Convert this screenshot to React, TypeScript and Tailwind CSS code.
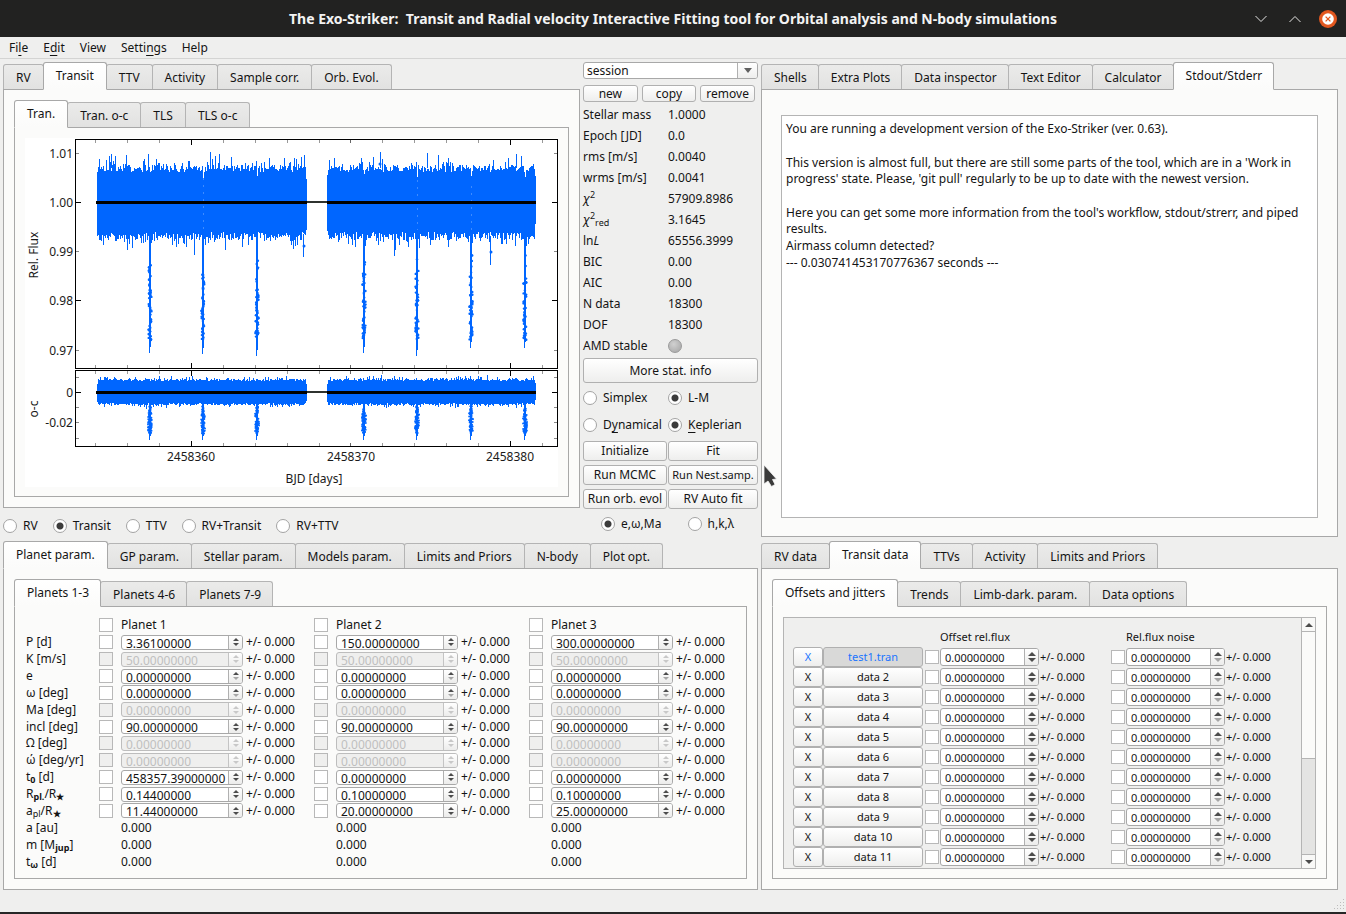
import React, { ReactNode, useId, useState } from "react";
import clsx from "clsx";

const BLUE = "#0066ff";

/* ---------- shared controls ---------- */

type TabsProps = {
  label: string;
  tabs: string[];
  active: number;
  className?: string;
  tabClassName?: string;
  paneClassName?: string;
  children: ReactNode;
};

function Tabs({ label, tabs, active, className, tabClassName = "px-[12px]", paneClassName, children }: TabsProps) {
  const [current, setCurrent] = useState(active);
  return (
    <section aria-label={label} className={clsx("flex min-w-0 flex-col", className)}>
      <div role="tablist" aria-label={label} className="flex h-[27px] items-end">
        {tabs.map((tab, i) => (
          <button
            key={tab}
            type="button"
            role="tab"
            aria-selected={i === current}
            onClick={() => setCurrent(i)}
            className={clsx(
              "-mr-px -mb-px shrink-0 rounded-t-[3px] border leading-4 whitespace-nowrap",
              tabClassName,
              i === current
                ? "relative z-10 h-[28px] border-[#a8a8a8] border-b-[#fbfbfa] bg-gradient-to-b from-white to-[#fbfbfa]"
                : "h-[26px] border-[#b4b4b4] border-b-[#a8a8a8] bg-gradient-to-b from-[#ebebea] to-[#e2e2e1] pt-[2px]",
            )}
          >
            {tab}
          </button>
        ))}
      </div>
      <div className={clsx("flex min-w-0 grow flex-col border border-[#a8a8a8] bg-[#fbfbfa]", paneClassName)}>
        {children}
      </div>
    </section>
  );
}

function PushButton({ children, className }: { children: ReactNode; className?: string }) {
  return (
    <button
      type="button"
      className={clsx(
        "min-w-0 rounded-[3px] border border-[#b0b0b0] text-center whitespace-nowrap",
        className ?? "bg-gradient-to-b from-white to-[#eeeeed]",
      )}
    >
      {children}
    </button>
  );
}

type RadioProps = { name: string; checked?: boolean; children: ReactNode; className?: string };

function Radio({ name, checked, children, className }: RadioProps) {
  return (
    <label className={clsx("flex items-center gap-[6px] whitespace-nowrap", className)}>
      <input
        type="radio"
        name={name}
        defaultChecked={checked}
        className="size-[14px] shrink-0 appearance-none rounded-full border border-[#a3a3a3] bg-white checked:bg-[radial-gradient(circle,#3c3c3c_0_3px,#ffffff_4px)]"
      />
      <span>{children}</span>
    </label>
  );
}

function Check({ label, disabled }: { label: string; disabled?: boolean }) {
  return (
    <input
      type="checkbox"
      aria-label={label}
      disabled={disabled}
      className="size-[14px] shrink-0 appearance-none border border-[#b8b8b8] bg-white checked:bg-[#5c5c5c] disabled:bg-[#efefee]"
    />
  );
}

type SpinProps = { label: string; value: string; disabled?: boolean; atMin?: boolean; large?: boolean; className: string };

function Spin({ label, value, disabled, atMin, large, className }: SpinProps) {
  const up = disabled ? "#c8c8c8" : "#4c4c4c";
  const down = disabled ? "#c8c8c8" : atMin ? "#a6a6a6" : "#4c4c4c";
  const tri = large ? "h-[4px] w-[8px]" : "h-[3px] w-[6px]";
  return (
    <span
      className={clsx(
        "flex shrink-0 overflow-hidden rounded-[3px] border",
        disabled ? "border-[#bdbdbd] bg-[#efefee]" : "border-[#a8a8a8] bg-white",
        className,
      )}
    >
      <input
        type="text"
        inputMode="decimal"
        aria-label={label}
        defaultValue={value}
        disabled={disabled}
        className="w-0 grow bg-transparent pt-[2px] pl-[4px] leading-3 outline-none disabled:text-[#bfbfbf]"
      />
      <span
        className={clsx(
          "flex w-[14px] flex-col items-center justify-center gap-[2px] border-l bg-gradient-to-b from-white to-[#ececeb]",
          disabled ? "border-[#c4c4c4]" : "border-[#b0b0b0]",
        )}
      >
        <button type="button" aria-label={`Increase ${label}`} disabled={disabled} className="block">
          <svg viewBox="0 0 8 4" className={clsx("block", tri)} aria-hidden="true">
            <path d="M4 0 8 4H0z" fill={up} />
          </svg>
        </button>
        <button type="button" aria-label={`Decrease ${label}`} disabled={disabled} className="block">
          <svg viewBox="0 0 8 4" className={clsx("block", tri)} aria-hidden="true">
            <path d="M0 0H8L4 4z" fill={down} />
          </svg>
        </button>
      </span>
    </span>
  );
}

/* ---------- light curve ---------- */

function makeRandom(seed: number) {
  let s = seed;
  return () => {
    s = (s * 1664525 + 1013904223) % 4294967296;
    return s / 4294967296;
  };
}

const RUNS: [number, number][] = [
  [72, 281],
  [302, 510],
];
const TRANSITS = [125, 178, 232, 339, 392, 446, 500];

function fluxBand() {
  const rnd = makeRandom(7);
  let d = "";
  for (const [a, b] of RUNS) {
    for (let x = a; x <= b; x++) {
      const edge = x === a || x === b ? 9 : 0;
      const notch = TRANSITS.includes(x) ? 9 : 0;
      const top = 34 - rnd() * 7 - Math.pow(rnd(), 7) * 14 + edge + notch;
      const bottom = 94 + rnd() * 8 + Math.pow(rnd(), 6) * 13 - edge;
      d += `M${x + 0.5} ${top.toFixed(1)}V${bottom.toFixed(1)}`;
    }
  }
  return d;
}

function residualBand() {
  const rnd = makeRandom(19);
  let d = "";
  for (const [a, b] of RUNS) {
    for (let x = a; x <= b; x++) {
      const edge = x === a || x === b ? 3 : 0;
      const top = 243 - rnd() * 2 - Math.pow(rnd(), 5) * 4 + edge;
      const bottom = 265 + rnd() * 2 + Math.pow(rnd(), 5) * 4 - edge;
      d += `M${x + 0.5} ${top.toFixed(1)}V${bottom.toFixed(1)}`;
    }
  }
  return d;
}

type Dot = { x: number; y: number; r: number };

function transitDots() {
  const rnd = makeRandom(43);
  const dots: Dot[] = [];
  for (const t of TRANSITS) {
    for (let i = 0; i < 46; i++) {
      const y = 108 + Math.sqrt(rnd()) * 94;
      dots.push({ x: t + (rnd() - 0.5) * 3, y, r: 1.2 });
    }
    for (let i = 0; i < 70; i++) {
      const f = rnd();
      const spread = f < 0.25 || f > 0.9 ? 2 : 4;
      dots.push({ x: t + (rnd() - 0.5) * spread, y: 268 + f * 28, r: 1 });
    }
  }
  return dots;
}

const FLUX_BAND = fluxBand();
const RESIDUAL_BAND = residualBand();
const DOTS = transitDots();
const DIP_ENDS = [215, 216, 218, 215, 218, 210, 210];
const X_TICKS = [70, 102, 134, 166, 198, 230, 262, 294, 325, 357, 389, 421, 453, 485, 517];
const MAJOR_X = [166, 485];

const FLUX_TICKS = [
  { y: 15.5, text: "1.01", major: false },
  { y: 64.5, text: "1.00", major: true },
  { y: 113.5, text: "0.99", major: false },
  { y: 162.5, text: "0.98", major: true },
  { y: 212.5, text: "0.97", major: false },
];
const RESIDUAL_TICKS = [
  { y: 239.5, text: "", major: false },
  { y: 254.5, text: "0", major: true },
  { y: 269.5, text: "", major: false },
  { y: 284.5, text: "-0.02", major: false },
  { y: 300.5, text: "", major: false },
];

function XTicks({ top, bottom }: { top: number; bottom: number }) {
  return (
    <>
      {X_TICKS.map((x) => {
        const major = MAJOR_X.includes(x);
        const len = major ? 5 : 3;
        return (
          <path
            key={x}
            d={`M${x + 0.5} ${top}v${len}M${x + 0.5} ${bottom}v${-len}`}
            stroke={major ? "#000" : x === 325 ? "#666" : "#999"}
          />
        );
      })}
    </>
  );
}

function YTicks({ ticks }: { ticks: typeof FLUX_TICKS }) {
  return (
    <>
      {ticks.map((t) => {
        const len = t.major ? 5 : 3;
        return (
          <g key={t.y}>
            <path d={`M51 ${t.y}h${len}M532 ${t.y}h${-len}`} stroke={t.major ? "#000" : "#888"} />
            <text x="48" y={t.y + 4} textAnchor="end" fill="#1a1a1a" stroke="none">
              {t.text}
            </text>
          </g>
        );
      })}
    </>
  );
}

function LightCurve() {
  return (
    <svg
      viewBox="0 0 533 349"
      role="img"
      aria-label="Relative flux and residuals against BJD"
      className="block w-full bg-white text-[12px]"
    >
      <g shapeRendering="crispEdges" fill="none">
        <path d={FLUX_BAND} stroke={BLUE} />
        <path d={RESIDUAL_BAND} stroke={BLUE} />
        {TRANSITS.map((t, i) => (
          <path
            key={t}
            d={`M${t} 92V${DIP_ENDS[i] - 6}M${t} 262V298`}
            stroke={BLUE}
            strokeWidth="2"
          />
        ))}
        {TRANSITS.map((t, i) => (
          <path key={t} d={`M${t - 0.5} 200V${DIP_ENDS[i]}M${t - 0.5} 290V302`} stroke={BLUE} />
        ))}
        <path d="M178.5 40V92M392.5 42V92M446.5 48V92" stroke="#3d8bff" strokeDasharray="2 5" />
        <path d="M278.5 96V119M490.5 96V108M465.5 98V127M169.500 96V117M369.500 96V118" stroke={BLUE} />
        <path d="M86.500 30V16M123.500 30V16M355.500 30V14M402.500 30V15M491.500 30V16M279.500 30V17" stroke={BLUE} />
      </g>
      <g fill={BLUE}>
        {DOTS.map((p, i) => (
          <circle key={i} cx={p.x.toFixed(1)} cy={p.y.toFixed(1)} r={p.r} />
        ))}
        <circle cx="466" cy="114" r="1.5" />
        <circle cx="279" cy="108" r="1.5" />
        <circle cx="355" cy="26" r="1.5" />
      </g>
      <g shapeRendering="crispEdges" fill="none" stroke="#000">
        <path d="M71 64.5H282M302 64.5H511M71 254.5H282M302 254.5H511" strokeWidth="3" />
        <path d="M282 64H302M282 254H302" strokeWidth="2" stroke="#2f332f" />
        <XTicks top={2} bottom={230} />
        <XTicks top={233} bottom={308} />
        <rect x="50.5" y="1.5" width="482" height="229" />
        <rect x="50.5" y="232.5" width="482" height="76" />
        <YTicks ticks={FLUX_TICKS} />
        <YTicks ticks={RESIDUAL_TICKS} />
      </g>
      <g fill="#1a1a1a" textAnchor="middle">
        <text x="166" y="323">2458360</text>
        <text x="326" y="323">2458370</text>
        <text x="485" y="323">2458380</text>
        <text x="289" y="345">BJD [days]</text>
        <text transform="translate(13 117) rotate(-90)">Rel. Flux</text>
        <text transform="translate(13 271) rotate(-90)">o-c</text>
      </g>
    </svg>
  );
}

/* ---------- statistics column ---------- */

const STATS: [ReactNode, ReactNode][] = [
  ["Stellar mass", "1.0000"],
  ["Epoch [JD]", "0.0"],
  ["rms [m/s]", "0.0040"],
  ["wrms [m/s]", "0.0041"],
  [
    <span>
      <i>χ</i>
      <sup className="text-[9px]">2</sup>
    </span>,
    "57909.8986",
  ],
  [
    <span>
      <i>χ</i>
      <sup className="text-[9px]">2</sup>
      <sub className="text-[9px]">red</sub>
    </span>,
    "3.1645",
  ],
  [
    <span>
      ln<i>L</i>
    </span>,
    "65556.3999",
  ],
  ["BIC", "0.00"],
  ["AIC", "0.00"],
  ["N data", "18300"],
  ["DOF", "18300"],
  [
    "AMD stable",
    <span
      role="img"
      aria-label="off"
      className="block size-[14px] rounded-full border border-[#9a9a9a] bg-[radial-gradient(circle_at_40%_35%,#d0d0d0,#a4a4a4)]"
    />,
  ],
];

function Mnemonic({ children }: { children: ReactNode }) {
  return <span className="underline underline-offset-[3px]">{children}</span>;
}

function FitColumn() {
  return (
    <div className="flex flex-col">
      <div className="grid h-[17px] rounded-[3px] border border-[#a8a8a8] bg-white">
        <select
          aria-label="Session"
          defaultValue="session"
          className="col-start-1 row-start-1 h-[15px] appearance-none bg-transparent pt-px pl-[3px] leading-[14px] outline-none"
        >
          <option>session</option>
        </select>
        <span className="pointer-events-none col-start-1 row-start-1 grid w-[20px] place-items-center justify-self-end rounded-r-[2px] border-l border-[#b0b0b0] bg-gradient-to-b from-white to-[#eeeeed]">
          <svg viewBox="0 0 8 5" className="h-[5px] w-[8px]" aria-hidden="true">
            <path d="M0 0H8L4 5z" fill="#606060" />
          </svg>
        </span>
      </div>
      <div className="mt-[6px] mr-[3px] grid h-[17px] grid-cols-3 gap-[4px] leading-[14px]">
        <PushButton>new</PushButton>
        <PushButton>copy</PushButton>
        <PushButton>remove</PushButton>
      </div>
      <dl className="mt-[2px]">
        {STATS.map(([name, value], i) => (
          <div key={i} className="grid h-[21px] grid-cols-[85px_1fr] items-center leading-4">
            <dt>{name}</dt>
            <dd>{value}</dd>
          </div>
        ))}
      </dl>
      <div className="mt-[2px] grid h-[25px]">
        <PushButton>More stat. info</PushButton>
      </div>
      <div className="mt-px grid grid-cols-[85px_1fr] leading-[27px]">
        <Radio name="minimizer">Simplex</Radio>
        <Radio name="minimizer" checked>
          L-M
        </Radio>
        <Radio name="model">
          D<Mnemonic>y</Mnemonic>namical
        </Radio>
        <Radio name="model" checked>
          <Mnemonic>K</Mnemonic>eplerian
        </Radio>
      </div>
      <div className="mt-[3px] grid auto-rows-[20px] grid-cols-[84px_1fr] gap-x-px gap-y-[4px] leading-[18px]">
        <PushButton>Initialize</PushButton>
        <PushButton>Fit</PushButton>
        <PushButton>Run MCMC</PushButton>
        <PushButton>
          <span className="text-[11px]">Run Nest.samp.</span>
        </PushButton>
        <PushButton>Run orb. evol</PushButton>
        <PushButton>RV Auto fit</PushButton>
      </div>
      <div className="mt-[5px] grid grid-cols-2 pl-[18px] leading-[20px]">
        <Radio name="coords" checked>
          e,ω,Ma
        </Radio>
        <Radio name="coords" className="pl-[8px]">
          h,k,λ
        </Radio>
      </div>
    </div>
  );
}

/* ---------- planet parameters ---------- */

type Param = { key: string; label: ReactNode; values: string[]; disabled?: boolean; atMin?: boolean };

const Sub = ({ children }: { children: ReactNode }) => <sub className="bottom-[-2px] text-[9px] font-bold">{children}</sub>;
const zeros = ["0.00000000", "0.00000000", "0.00000000"];

const PARAMS: Param[] = [
  { key: "P", label: "P [d]", values: ["3.36100000", "150.00000000", "300.00000000"] },
  { key: "K", label: "K [m/s]", values: ["50.00000000", "50.00000000", "50.00000000"], disabled: true },
  { key: "e", label: "e", values: zeros, atMin: true },
  { key: "omega", label: "ω [deg]", values: zeros, atMin: true },
  { key: "Ma", label: "Ma [deg]", values: zeros, disabled: true },
  { key: "incl", label: "incl [deg]", values: ["90.00000000", "90.00000000", "90.00000000"] },
  { key: "Omega", label: "Ω [deg]", values: zeros, disabled: true },
  { key: "omega dot", label: "ώ [deg/yr]", values: zeros, disabled: true },
  { key: "t0", label: <>t<Sub>0</Sub> [d]</>, values: ["458357.39000000", "0.00000000", "0.00000000"] },
  { key: "Rpl", label: <>R<Sub>pl.</Sub>/R<Sub>★</Sub></>, values: ["0.14400000", "0.10000000", "0.10000000"] },
  { key: "apl", label: <>a<sub className="bottom-[-2px] text-[9px]">pl</sub>/R<Sub>★</Sub></>, values: ["11.44000000", "20.00000000", "25.00000000"] },
];

const DERIVED: { key: string; label: ReactNode }[] = [
  { key: "a", label: "a [au]" },
  { key: "m", label: <>m [M<Sub>jup</Sub>]</> },
  { key: "tw", label: <>t<Sub>ω</Sub> [d]</> },
];

function PlanetGrid() {
  const id = useId();
  return (
    <div className="grid grow auto-rows-fr grid-cols-[73px_repeat(3,minmax(0,1fr))] items-center leading-[14px] whitespace-nowrap">
      <span />
      {[1, 2, 3].map((n) => (
        <label key={n} htmlFor={`${id}-${n}`} className="flex items-center gap-[8px]">
          <input
            id={`${id}-${n}`}
            type="checkbox"
            className="size-[14px] appearance-none border border-[#b8b8b8] bg-white checked:bg-[#5c5c5c]"
          />
          Planet {n}
        </label>
      ))}
      {PARAMS.map((p) => (
        <React.Fragment key={p.key}>
          <span>{p.label}</span>
          {p.values.map((v, i) => (
            <div key={i} className="flex items-center">
              <Check label={`Fit ${p.key}, planet ${i + 1}`} disabled={p.disabled} />
              <Spin
                label={`${p.key}, planet ${i + 1}`}
                value={v}
                disabled={p.disabled}
                atMin={p.atMin}
                className="ml-[8px] h-[15px] w-[122px]"
              />
              <span className="ml-[3px]">+/- 0.000</span>
            </div>
          ))}
        </React.Fragment>
      ))}
      {DERIVED.map((p) => (
        <React.Fragment key={p.key}>
          <span>{p.label}</span>
          {[1, 2, 3].map((n) => (
            <span key={n} className="pl-[22px]">
              0.000
            </span>
          ))}
        </React.Fragment>
      ))}
    </div>
  );
}

/* ---------- transit data ---------- */

const DATASETS = ["test1.tran", "data 2", "data 3", "data 4", "data 5", "data 6", "data 7", "data 8", "data 9", "data 10", "data 11"];
const DATA_COLS = "grid grid-cols-[130px_186px_1fr] items-center pl-[9px]";

function DatasetList() {
  return (
    <div className="flex grow border border-[#b4b4b4] bg-[#efefee] text-[11px] leading-[14px]">
      <div className="min-w-0 grow whitespace-nowrap">
        <div className={clsx(DATA_COLS, "h-[29px] pt-[8px]")}>
          <span />
          <span className="pl-[17px]">Offset rel.flux</span>
          <span className="pl-[17px]">Rel.flux noise</span>
        </div>
        {DATASETS.map((name, i) => {
          const loaded = i === 0;
          const face = "bg-gradient-to-b from-white to-[#eeeeed]";
          return (
            <div key={name} className={clsx(DATA_COLS, "h-[20px]")}>
              <div className="grid h-[20px] grid-cols-[30px_100px]">
                <PushButton className={clsx(face, loaded && "text-[#1a75ff]")}>X</PushButton>
                <PushButton className={loaded ? "bg-[#d9d9d8] text-[#1a75ff]" : face}>{name}</PushButton>
              </div>
              {["offset", "noise"].map((kind) => (
                <div key={kind} className="flex items-center pl-[2px]">
                  <Check label={`Fit ${kind} of ${name}`} />
                  <Spin
                    label={`${kind} of ${name}`}
                    value="0.00000000"
                    atMin={kind === "noise"}
                    large
                    className="ml-px h-[18px] w-[99px]"
                  />
                  <span className="ml-px">+/- 0.000</span>
                </div>
              ))}
            </div>
          );
        })}
      </div>
      <div className="flex w-[14px] flex-col border-l border-[#b4b4b4] bg-[#e4e4e3]">
        <button type="button" aria-label="Scroll up" className="grid h-[14px] place-items-center border-b border-[#b4b4b4] bg-[#f8f8f7]">
          <svg viewBox="0 0 8 4" className="h-[4px] w-[8px]" aria-hidden="true">
            <path d="M4 0 8 4H0z" fill="#4c4c4c" />
          </svg>
        </button>
        <div className="h-[127px] border-b border-[#b4b4b4] bg-[#fafaf9]" />
        <button type="button" aria-label="Scroll down" className="mt-auto grid h-[14px] place-items-center border-t border-[#b4b4b4] bg-[#f8f8f7]">
          <svg viewBox="0 0 8 4" className="h-[4px] w-[8px]" aria-hidden="true">
            <path d="M0 0H8L4 4z" fill="#4c4c4c" />
          </svg>
        </button>
      </div>
    </div>
  );
}

/* ---------- window ---------- */

const LOG = [
  "You are running a development version of the Exo-Striker (ver. 0.63).",
  "\u00a0",
  "This version is almost full, but there are still some parts of the tool, which are in a 'Work in progress' state. Please, 'git pull' regularly to be up to date with the newest version.",
  "\u00a0",
  "Here you can get some more information from the tool's workflow, stdout/strerr, and piped results.",
  "Airmass column detected?",
  "--- 0.030741453170776367 seconds ---",
];

function TitleBar() {
  return (
    <header className="flex h-[37px] items-center bg-[#222221] pr-[9px] pl-[91px] text-[#f3f3f3]">
      <h1 className="grow text-center text-[14px] font-bold whitespace-pre">
        The Exo-Striker:  Transit and Radial velocity Interactive Fitting tool for Orbital analysis and N-body simulations
      </h1>
      <button type="button" aria-label="Minimize" className="ml-auto">
        <svg viewBox="0 0 12 8" className="h-[8px] w-[12px]" fill="none" stroke="#e4e4e4" aria-hidden="true">
          <path d="M.5 1 6 6.5 11.500 1" />
        </svg>
      </button>
      <button type="button" aria-label="Maximize" className="ml-[22px]">
        <svg viewBox="0 0 12 8" className="h-[8px] w-[12px]" fill="none" stroke="#e4e4e4" aria-hidden="true">
          <path d="M.5 7 6 1.500 11.500 7" />
        </svg>
      </button>
      <button type="button" aria-label="Close" className="ml-[18px]">
        <svg viewBox="0 0 18 18" className="size-[18px]" aria-hidden="true">
          <circle cx="9" cy="9" r="9" fill="#e2571f" />
          <circle cx="9" cy="9" r="5.800" fill="#fff" />
          <path d="m6.600 6.600 4.800 4.800m0-4.800-4.800 4.800" stroke="#e2571f" strokeWidth="1.300" />
        </svg>
      </button>
    </header>
  );
}

export default function App() {
  return (
    <div className="relative flex min-h-screen flex-col bg-[#efefee] font-['Noto_Sans','Open_Sans',sans-serif] text-[12px] leading-4 text-[#141414]">
      <TitleBar />
      <nav aria-label="Menu" className="flex h-[22px] items-center gap-[15px] border-b border-[#d4d4d3] px-[9px]">
        <button type="button">Fi<Mnemonic>l</Mnemonic>e</button>
        <button type="button">E<Mnemonic>d</Mnemonic>it</button>
        <button type="button">View</button>
        <button type="button">Setti<Mnemonic>n</Mnemonic>gs</button>
        <button type="button">Help</button>
      </nav>

      <main className="grid grow grid-cols-[minmax(0,755fr)_minmax(0,577fr)] grid-rows-[auto_1fr] gap-x-[3px] pt-[3px] pr-[8px] pl-[3px]">
        <div className="grid grid-cols-[minmax(0,1fr)_175px] gap-x-[3px]">
          <div className="flex flex-col">
            <Tabs
              label="Plots"
              tabs={["RV", "Transit", "TTV", "Activity", "Sample corr.", "Orb. Evol."]}
              active={1}
              paneClassName="p-[10px]"
            >
              <Tabs label="Transit plots" tabs={["Tran.", "Tran. o-c", "TLS", "TLS o-c"]} active={0} paneClassName="p-[10px] pb-[9px]">
                <LightCurve />
              </Tabs>
            </Tabs>
            <div className="flex h-[33px] items-center gap-[15px] pt-[3px]">
              <Radio name="data">RV</Radio>
              <Radio name="data" checked>
                Transit
              </Radio>
              <Radio name="data">TTV</Radio>
              <Radio name="data">RV+Transit</Radio>
              <Radio name="data">RV+TTV</Radio>
            </div>
          </div>
          <FitColumn />
        </div>

        <Tabs
          label="Tools"
          tabs={["Shells", "Extra Plots", "Data inspector", "Text Editor", "Calculator", "Stdout/Stderr"]}
          active={5}
          className="pb-[4px]"
          tabClassName="pl-[12px] pr-[11px]"
          paneClassName="px-[19px] pt-[25px] pb-[18px]"
        >
          <div role="log" className="grow border border-[#b4b4b4] bg-white px-[4px] py-[5px]">
            {LOG.map((line, i) => (
              <p key={i} className="mb-px leading-4">
                {line}
              </p>
            ))}
          </div>
        </Tabs>

        <Tabs
          label="Model setup"
          tabs={["Planet param.", "GP param.", "Stellar param.", "Models param.", "Limits and Priors", "N-body", "Plot opt."]}
          active={0}
          paneClassName="p-[10px]"
        >
          <Tabs
            label="Planets"
            tabs={["Planets 1-3", "Planets 4-6", "Planets 7-9"]}
            active={0}
            className="grow"
            tabClassName="pl-[12px] pr-[11px]"
            paneClassName="pt-[10px] pr-[2px] pb-[8px] pl-[11px]"
          >
            <PlanetGrid />
          </Tabs>
        </Tabs>

        <Tabs
          label="Data setup"
          tabs={["RV data", "Transit data", "TTVs", "Activity", "Limits and Priors"]}
          active={1}
          paneClassName="p-[10px]"
        >
          <Tabs
            label="Transit data setup"
            tabs={["Offsets and jitters", "Trends", "Limb-dark. param.", "Data options"]}
            active={0}
            className="grow"
            paneClassName="px-[10px] pt-[10px] pb-[9px]"
          >
            <DatasetList />
          </Tabs>
        </Tabs>
      </main>

      <footer className="flex h-[24px] items-end justify-end border-b-2 border-[#262626] pb-px">
        <svg viewBox="0 0 12 12" className="size-[12px]" fill="#bdbdbc" aria-hidden="true">
          <path d="M9 0h1v1H9zM6 3h1v1H6zM9 3h1v1H9zM3 6h1v1H3zM6 6h1v1H6zM9 6h1v1H9zM0 9h1v1H0zM3 9h1v1H3zM6 9h1v1H6zM9 9h1v1H9z" />
        </svg>
      </footer>

      <svg viewBox="0 0 14 24" className="pointer-events-none absolute top-[464px] left-[763px] h-[24px] w-[14px]" aria-hidden="true">
        <path d="M1 1v19l4-3 3.500 5.500 3.500-2-2.500-5 4-.5z" fill="#3a3a3a" stroke="#f4f4f4" strokeWidth=".8" />
      </svg>
    </div>
  );
}
